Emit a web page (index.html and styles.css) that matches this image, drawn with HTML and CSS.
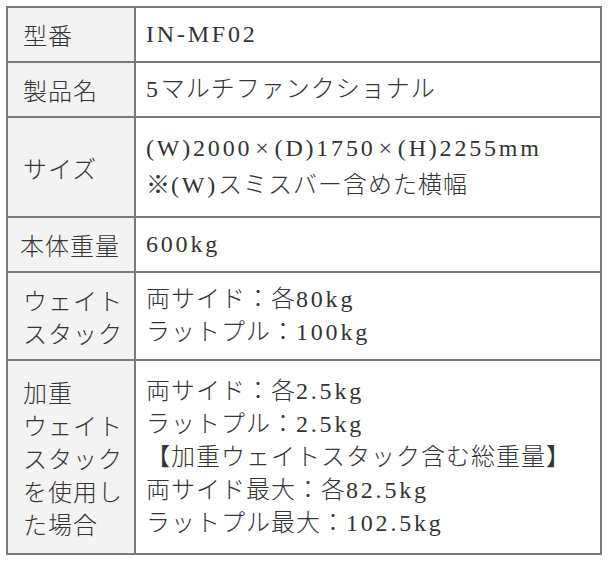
FILE: index.html
```html
<!DOCTYPE html>
<html lang="ja">
<head>
<meta charset="utf-8">
<title>仕様</title>
<link rel="stylesheet" href="styles.css">
</head>
<body>
<table class="spec">
  <tr>
    <th>型番</th>
    <td><span class="en">IN-MF02</span></td>
  </tr>
  <tr>
    <th>製品名</th>
    <td><span class="en">5</span>マルチファンクショナル</td>
  </tr>
  <tr class="size">
    <th>サイズ</th>
    <td><span class="en">(W)2000<span class="x">×</span>(D)1750<span class="x">×</span>(H)2255mm</span><br>※<span class="en">(W)</span>スミスバー含めた横幅</td>
  </tr>
  <tr>
    <th class="tight">本体重量</th>
    <td><span class="en">600kg</span></td>
  </tr>
  <tr>
    <th>ウェイト<br>スタック</th>
    <td>両サイド：各<span class="en">80kg</span><br>ラットプル：<span class="en">100kg</span></td>
  </tr>
  <tr class="last">
    <th>加重<br>ウェイト<br>スタック<br>を使用し<br>た場合</th>
    <td>両サイド：各<span class="en">2.5kg</span><br>ラットプル：<span class="en">2.5kg</span><br>【加重ウェイトスタック含む総重量】<br>両サイド最大：各<span class="en">82.5kg</span><br>ラットプル最大：<span class="en">102.5kg</span></td>
  </tr>
</table>
</body>
</html>
```
FILE: styles.css
```css
body {
  margin: 6px;
  background: #ffffff;
  color: #333333;
  font-family: "Liberation Serif", "Noto Sans CJK JP", serif;
}

.spec {
  width: 596px;
  table-layout: fixed;
  border-collapse: separate;
  border-spacing: 0;
  border-top: 2px solid #7a7a7a;
  border-left: 2px solid #7a7a7a;
  font-size: 24px;
  line-height: 33px;
  letter-spacing: 1px;
}

.spec th,
.spec td {
  border-right: 2px solid #7a7a7a;
  border-bottom: 2px solid #7a7a7a;
  padding: 10px;
  vertical-align: middle;
  text-align: left;
  font-weight: 300;
}

.spec th {
  width: 101px;
  padding-left: 15px;
  background: #f3f3f3;
  white-space: nowrap;
  font-family: "Noto Sans CJK JP", sans-serif;
}

.spec th.tight {
  padding-left: 12px;
  padding-right: 13px;
}

.spec .size th,
.spec .size td {
  padding-top: 12px;
  padding-bottom: 12px;
  line-height: 37px;
}

.spec .last th,
.spec .last td {
  padding-top: 14px;
  padding-bottom: 13px;
}

.en {
  letter-spacing: 2.8px;
}

.x {
  margin: 0 3px;
}
```
